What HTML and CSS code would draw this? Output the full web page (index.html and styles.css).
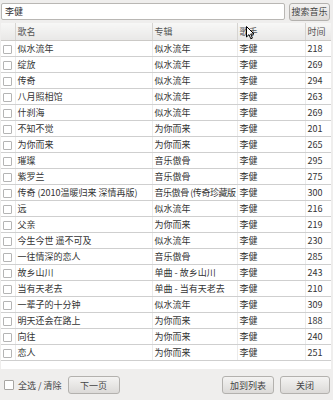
FILE: index.html
```html
<!DOCTYPE html>
<html lang="zh">
<head>
    <meta charset="UTF-8">
    <title>搜索音乐</title>
    <link rel="stylesheet" href="styles.css">
</head>
<body>

<div class="dialog">
    <div class="search-bar">
        <input type="text" class="search-input" value="李健">
        <button class="btn search-btn">搜索音乐</button>
    </div>

    <div class="song-list">
        <table>
            <colgroup>
                <col class="col-check">
                <col class="col-name">
                <col class="col-album">
                <col class="col-artist">
                <col class="col-time">
            </colgroup>
            <thead>
                <tr><th></th><th>歌名</th><th>专辑</th><th>歌手</th><th>时间</th></tr>
            </thead>
            <tbody>
                <tr><td><span class="box"></span></td><td>似水流年</td><td>似水流年</td><td>李健</td><td>218</td></tr>
                <tr><td><span class="box"></span></td><td>绽放</td><td>似水流年</td><td>李健</td><td>269</td></tr>
                <tr><td><span class="box"></span></td><td>传奇</td><td>似水流年</td><td>李健</td><td>294</td></tr>
                <tr><td><span class="box"></span></td><td>八月照相馆</td><td>似水流年</td><td>李健</td><td>263</td></tr>
                <tr><td><span class="box"></span></td><td>什刹海</td><td>似水流年</td><td>李健</td><td>269</td></tr>
                <tr><td><span class="box"></span></td><td>不知不觉</td><td>为你而来</td><td>李健</td><td>201</td></tr>
                <tr><td><span class="box"></span></td><td>为你而来</td><td>为你而来</td><td>李健</td><td>265</td></tr>
                <tr><td><span class="box"></span></td><td>璀璨</td><td>音乐傲骨</td><td>李健</td><td>295</td></tr>
                <tr><td><span class="box"></span></td><td>紫罗兰</td><td>音乐傲骨</td><td>李健</td><td>275</td></tr>
                <tr><td><span class="box"></span></td><td>传奇 (2010温暖归来 深情再版)</td><td class="tight">音乐傲骨 (传奇珍藏版</td><td>李健</td><td>300</td></tr>
                <tr><td><span class="box"></span></td><td>远</td><td>似水流年</td><td>李健</td><td>216</td></tr>
                <tr><td><span class="box"></span></td><td>父亲</td><td>为你而来</td><td>李健</td><td>219</td></tr>
                <tr><td><span class="box"></span></td><td>今生今世 遥不可及</td><td>似水流年</td><td>李健</td><td>230</td></tr>
                <tr><td><span class="box"></span></td><td>一往情深的恋人</td><td>音乐傲骨</td><td>李健</td><td>285</td></tr>
                <tr><td><span class="box"></span></td><td>故乡山川</td><td>单曲 - 故乡山川</td><td>李健</td><td>243</td></tr>
                <tr><td><span class="box"></span></td><td>当有天老去</td><td>单曲 - 当有天老去</td><td>李健</td><td>210</td></tr>
                <tr><td><span class="box"></span></td><td>一辈子的十分钟</td><td>似水流年</td><td>李健</td><td>309</td></tr>
                <tr><td><span class="box"></span></td><td>明天还会在路上</td><td>为你而来</td><td>李健</td><td>188</td></tr>
                <tr><td><span class="box"></span></td><td>向往</td><td>为你而来</td><td>李健</td><td>240</td></tr>
                <tr><td><span class="box"></span></td><td>恋人</td><td>为你而来</td><td>李健</td><td>251</td></tr>
            </tbody>
        </table>
    </div>

    <div class="bottom-bar">
        <label class="select-all"><span class="box big"></span>全选 / 清除</label>
        <button class="btn">下一页</button>
        <span class="spacer"></span>
        <button class="btn">加到列表</button>
        <button class="btn close-btn">关闭</button>
    </div>

    <!-- puntatore del mouse sopra l'intestazione -->
    <svg class="cursor" width="9" height="14" viewBox="0 0 9 14">
        <path d="M0.5 0.5 L0.5 11 L3 8.6 L4.8 12.8 L6.4 12.1 L4.7 8 L8 8 Z" fill="#fff" stroke="#000" stroke-width="1" stroke-linejoin="round"/>
    </svg>
</div>

</body>
</html>
```

FILE: styles.css
```css
body {
    margin: 0;
    padding: 0;
    background-color: #efeeed;
    font-family: "Noto Sans CJK SC", "Noto Sans", sans-serif;
    font-size: 9px;
    color: #333;
}

.dialog {
    position: relative;
    width: 333px;
    height: 400px;
}

.search-bar {
    display: flex;
    align-items: center;
    gap: 4px;
    padding: 2px 3px 0 1px;
    height: 19px;
}

.search-input {
    flex: 1;
    height: 17px;
    box-sizing: border-box;
    border: 1px solid #b9b7b4;
    border-radius: 2px;
    background-color: #fff;
    padding: 0 3px;
    font-family: inherit;
    font-size: 9px;
    color: #333;
    outline: none;
}

.btn {
    height: 18px;
    box-sizing: border-box;
    border: 1px solid #b3b1ae;
    border-radius: 3px;
    background: linear-gradient(#f4f3f2, #dcdad8);
    font-family: inherit;
    font-size: 9px;
    color: #444;
    padding: 0;
    width: 52px;
}

.search-btn {
    width: 41px;
    height: 18px;
}

.song-list {
    margin: 2px 2px 0 1px;
    height: 346px;
    background-color: #fff;
    overflow: hidden;
}

table {
    width: 100%;
    border-collapse: collapse;
    table-layout: fixed;
}

.col-check { width: 14px; }
.col-name { width: 137px; }
.col-album { width: 85px; }
.col-artist { width: 68px; }

th {
    height: 17px;
    padding: 0 0 0 2px;
    text-align: left;
    font-weight: normal;
    color: #555;
    background: linear-gradient(#f7f7f6, #e9e8e7);
    border-bottom: 1px solid #cbc9c6;
    border-right: 1px solid #d6d4d1;
}

td {
    height: 15px;
    padding: 0 0 0 2px;
    white-space: nowrap;
    overflow: hidden;
    text-overflow: clip;
    border-bottom: 1px solid #cfcfcf;
    border-right: 1px solid #ebebeb;
}

td.tight {
    letter-spacing: -0.45px;
}

th:last-child, td:last-child {
    border-right: none;
}

th:first-child, td:first-child {
    padding: 0;
    text-align: center;
}

.box {
    display: inline-block;
    width: 7px;
    height: 7px;
    border: 1px solid #b4b4b4;
    border-radius: 1px;
    background-color: #fff;
    vertical-align: middle;
}

.bottom-bar {
    display: flex;
    align-items: center;
    gap: 6px;
    padding: 0 3px 0 4px;
    height: 32px;
}

.select-all {
    display: flex;
    align-items: center;
    gap: 4px;
    color: #444;
}

.box.big {
    width: 8px;
    height: 8px;
    border-color: #a8a6a3;
}

.spacer {
    flex: 1;
}

.close-btn {
    width: 50px;
}

.cursor {
    position: absolute;
    left: 246px;
    top: 26px;
}
```
